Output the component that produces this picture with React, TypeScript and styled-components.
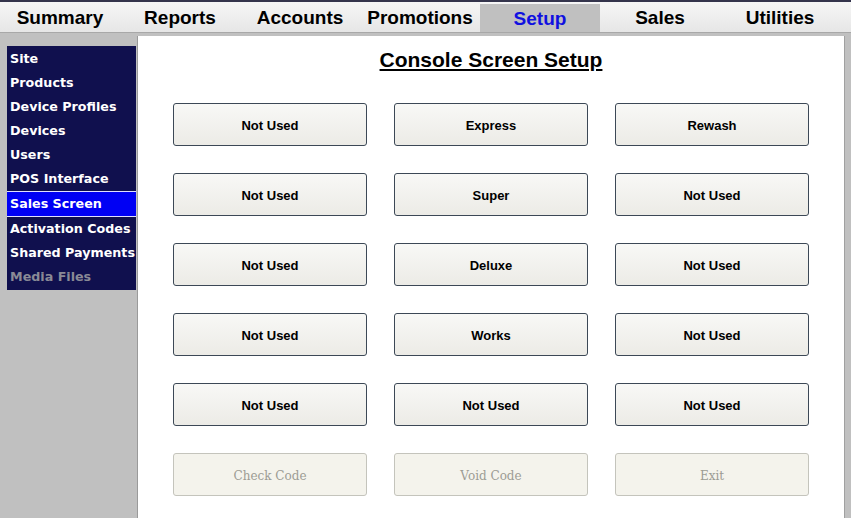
import * as React from "react";
import styled, { createGlobalStyle } from "styled-components";

const GlobalStyle = createGlobalStyle`
  html, body {
    margin: 0;
    padding: 0;
    background: #c0c0c0;
    overflow: hidden;
  }
`;

const Page = styled.div`
  width: 851px;
  height: 518px;
  display: flex;
  flex-direction: column;
  background: #c0c0c0;
  border-top: 2px solid #34344c;
  box-sizing: border-box;
  font-family: "Liberation Sans", Arial, sans-serif;
`;

const TabBar = styled.div`
  display: flex;
  height: 30px;
  background: linear-gradient(#f6f6f6, #e6e6e6);
  border-bottom: 1px solid #a8a8a8;
`;

const Tab = styled.div<{ $active?: boolean }>`
  width: 120px;
  display: flex;
  align-items: center;
  justify-content: center;
  padding-top: 2px;
  font-size: 19px;
  font-weight: bold;
  color: ${(p) => (p.$active ? "#1010e0" : "#000")};
  background: ${(p) => (p.$active ? "#c0c0c0" : "transparent")};
  margin-top: ${(p) => (p.$active ? "2px" : "0")};
  box-sizing: border-box;
`;

const TabFiller = styled.div`
  flex: 1;
`;

const Body = styled.div`
  flex: 1;
  display: flex;
  align-items: flex-start;
  min-height: 0;
`;

const Sidebar = styled.div`
  margin: 13px 0 0 7px;
  width: 129px;
  background: #10104e;
  padding: 1px 0 1px;
  display: flex;
  flex-direction: column;
`;

const SideItem = styled.div<{ $active?: boolean; $disabled?: boolean }>`
  height: 24px;
  line-height: 24px;
  padding-left: 3px;
  font-family: "DejaVu Sans", Verdana, sans-serif;
  font-size: 12.7px;
  font-weight: bold;
  white-space: nowrap;
  overflow: hidden;
  color: ${(p) => (p.$disabled ? "#8a8a96" : "#fff")};
  background: ${(p) => (p.$active ? "#0000f4" : "transparent")};
  border-top: ${(p) => (p.$active ? "1px solid #e0e0ff" : "none")};
  border-bottom: ${(p) => (p.$active ? "1px solid #e0e0ff" : "none")};
`;

const Content = styled.div`
  margin: 3px 0 0 1px;
  width: 708px;
  height: 482px;
  background: #fff;
  border-left: 1px solid #9a9a9a;
  border-right: 1px solid #a0a0a0;
  box-sizing: border-box;
  display: flex;
  flex-direction: column;
  align-items: center;
`;

const Title = styled.div`
  margin-top: 12px;
  font-size: 21px;
  font-weight: bold;
  text-decoration: underline;
  color: #000;
`;

const Grid = styled.div`
  margin-top: 31px;
  display: grid;
  grid-template-columns: repeat(3, 194px);
  column-gap: 27px;
  row-gap: 27px;
`;

const Button = styled.div<{ $disabled?: boolean }>`
  height: 43px;
  box-sizing: border-box;
  border-radius: 3px;
  border: 1px solid ${(p) => (p.$disabled ? "#c4c4bc" : "#3c4856")};
  background: ${(p) =>
    p.$disabled ? "#f4f3ec" : "linear-gradient(#f8f8f6, #ecebe6)"};
  display: flex;
  align-items: center;
  justify-content: center;
  padding-top: 2px;
  font-size: ${(p) => (p.$disabled ? "12px" : "13px")};
  font-weight: ${(p) => (p.$disabled ? "normal" : "bold")};
  font-family: ${(p) =>
    p.$disabled
      ? '"DejaVu Serif", "Liberation Serif", serif'
      : '"Liberation Sans", Arial, sans-serif'};
  color: ${(p) => (p.$disabled ? "#9c9c94" : "#000")};
`;

const tabs = [
  "Summary",
  "Reports",
  "Accounts",
  "Promotions",
  "Setup",
  "Sales",
  "Utilities",
];

const sideItems = [
  "Site",
  "Products",
  "Device Profiles",
  "Devices",
  "Users",
  "POS Interface",
  "Sales Screen",
  "Activation Codes",
  "Shared Payments",
  "Media Files",
];

const buttons = [
  "Not Used", "Express", "Rewash",
  "Not Used", "Super", "Not Used",
  "Not Used", "Deluxe", "Not Used",
  "Not Used", "Works", "Not Used",
  "Not Used", "Not Used", "Not Used",
];

const footerButtons = ["Check Code", "Void Code", "Exit"];

const App: React.FC = () => (
  <>
    <GlobalStyle />
    <Page>
      <TabBar>
        {tabs.map((label) => (
          <Tab key={label} $active={label === "Setup"}>
            {label}
          </Tab>
        ))}
        <TabFiller />
      </TabBar>
      <Body>
        <Sidebar>
          {sideItems.map((item) => (
            <SideItem
              key={item}
              $active={item === "Sales Screen"}
              $disabled={item === "Media Files"}
            >
              {item}
            </SideItem>
          ))}
        </Sidebar>
        <Content>
          <Title>Console Screen Setup</Title>
          <Grid>
            {buttons.map((label, i) => (
              <Button key={i}>{label}</Button>
            ))}
            {footerButtons.map((label) => (
              <Button key={label} $disabled>
                {label}
              </Button>
            ))}
          </Grid>
        </Content>
      </Body>
    </Page>
  </>
);

export default App;
